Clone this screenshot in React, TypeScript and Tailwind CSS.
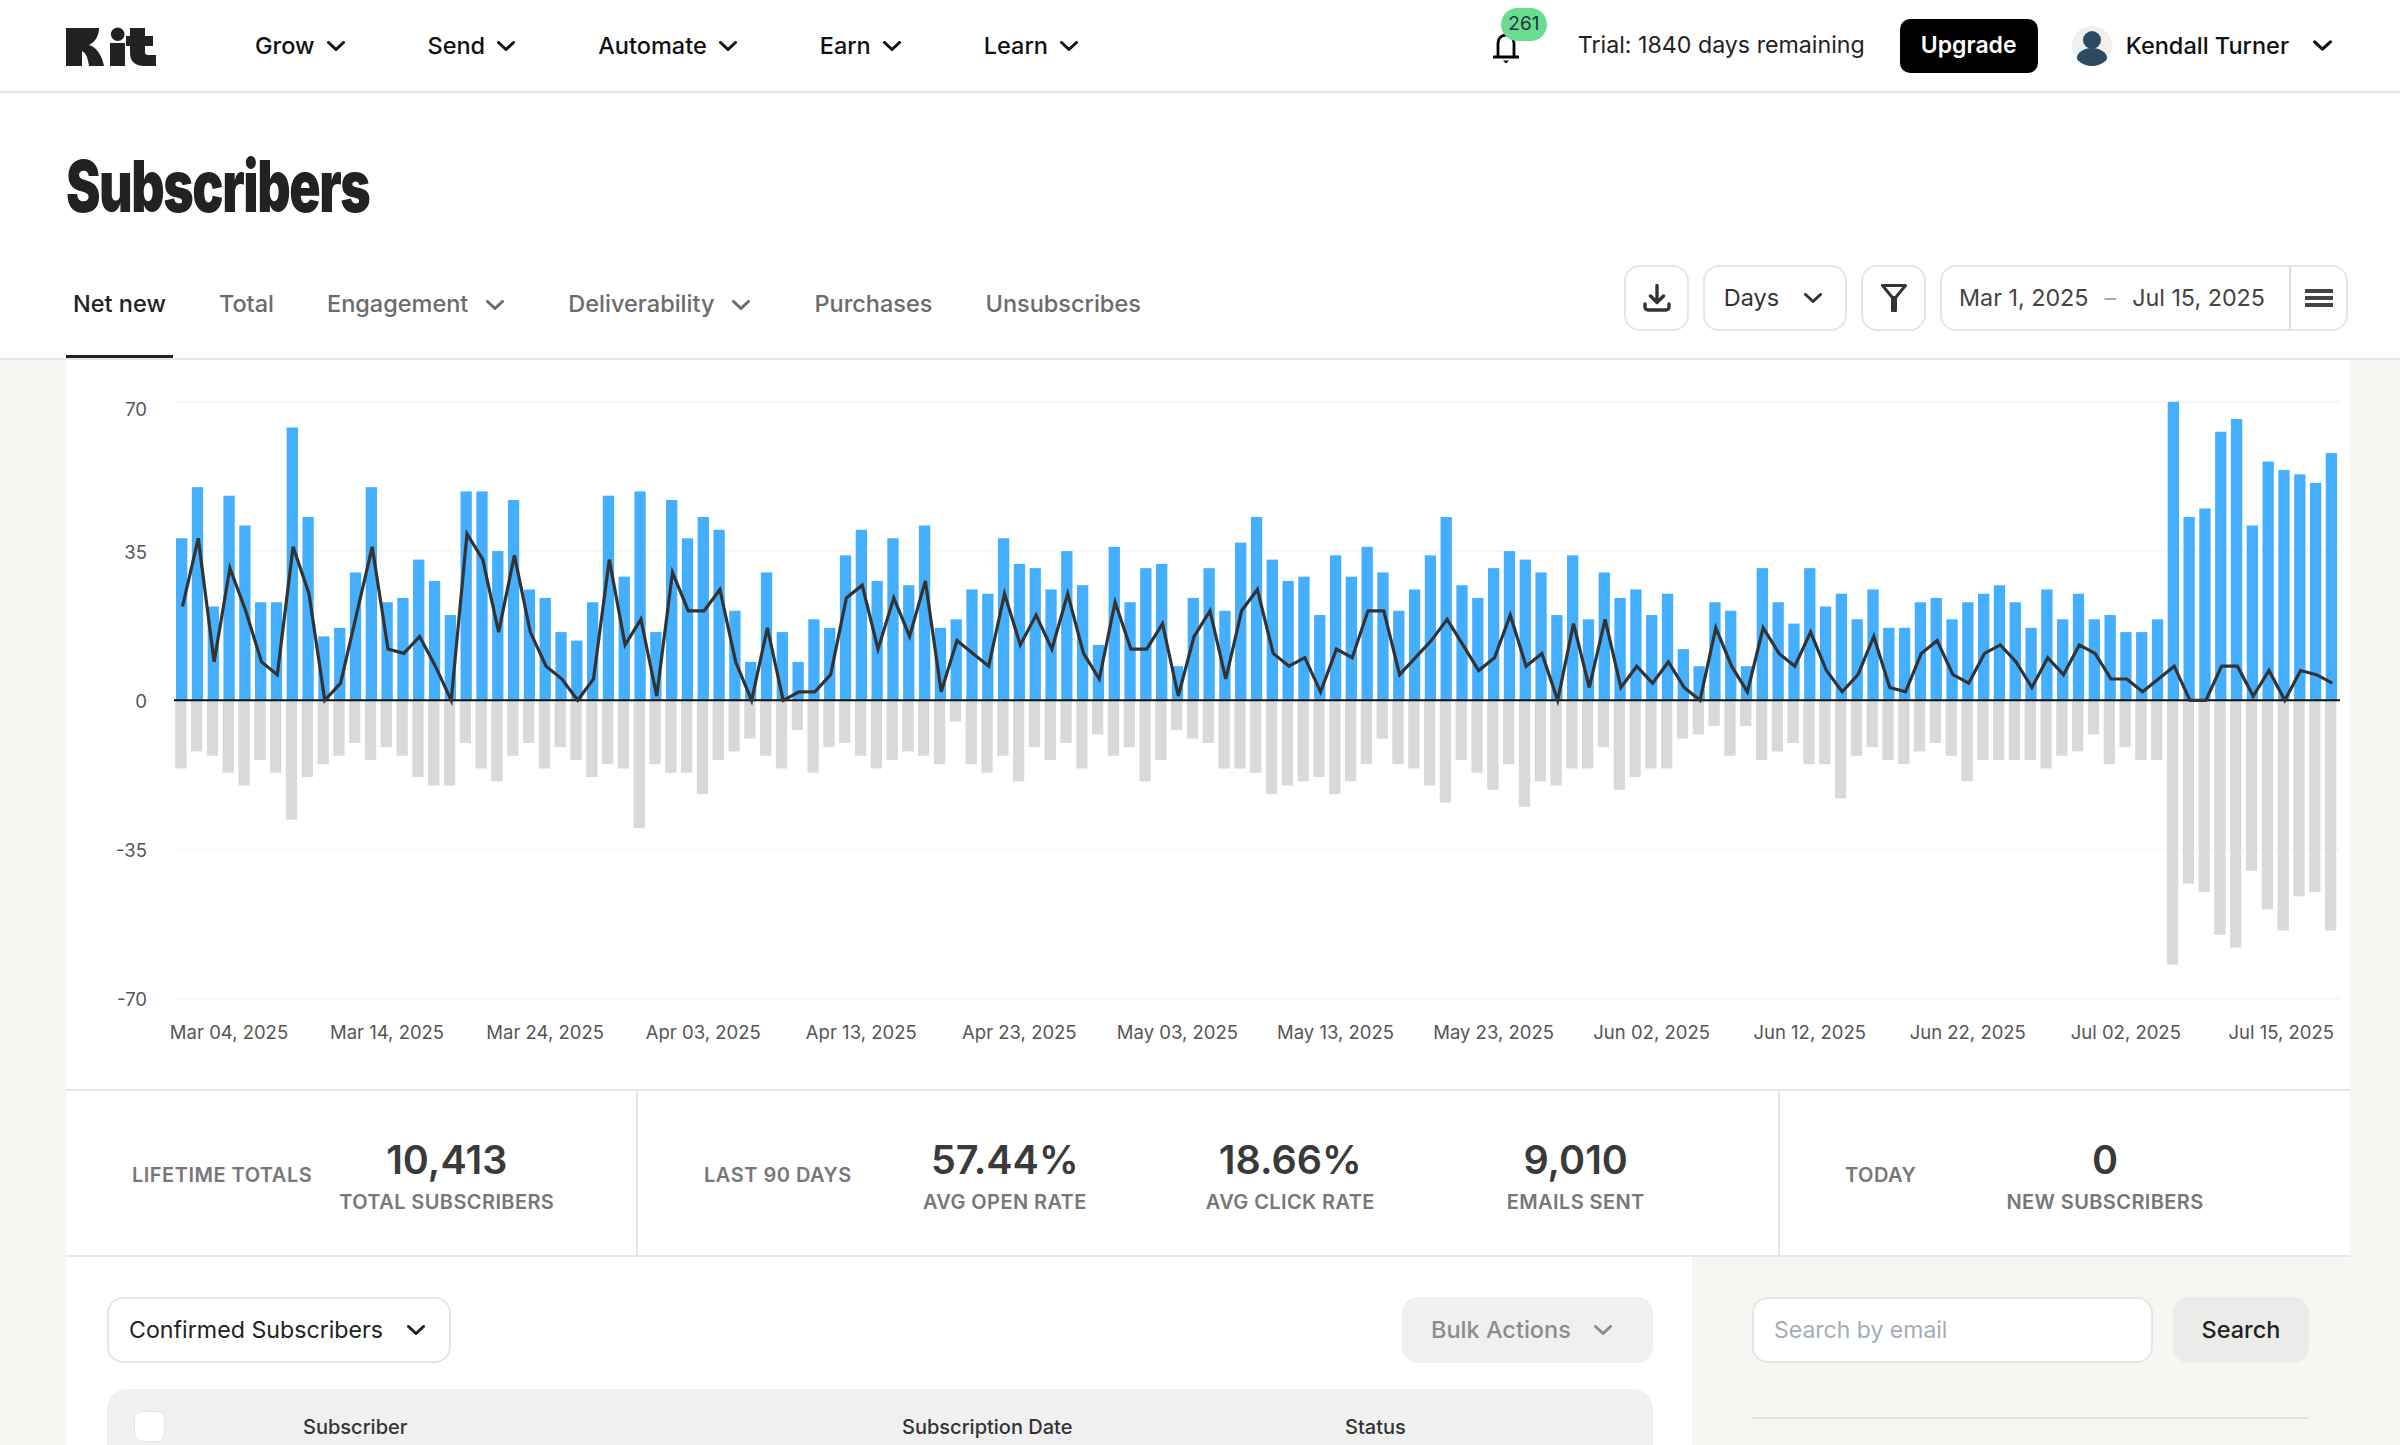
import type { ReactNode } from 'react'

const signups = [
  38, 50, 22, 48, 41, 23, 23, 64, 43, 15, 17, 30, 50, 23, 24, 33, 28, 20, 49, 49, 35, 47, 26, 24, 16, 14, 23, 48, 29, 49, 16,
  47, 38, 43, 40, 21, 9, 30, 16, 9, 19, 17, 34, 40, 28, 38, 27, 41, 17, 19, 26, 25, 38, 32, 31, 26, 35, 27, 13, 36, 23, 31, 32, 8, 24, 31, 21, 37, 43,
  33, 28, 29, 20, 34, 29, 36, 30, 21, 26, 34, 43, 27, 24, 31, 35, 33, 30, 20, 34, 19, 30, 24, 26, 20, 25, 12, 8, 23, 21, 8, 31, 23, 18, 31, 22, 25, 19,
  26, 17, 17, 23, 24, 19, 23, 25, 27, 23, 17, 26, 19, 25, 19, 20, 16, 16, 19, 70, 43, 45, 63, 66, 41, 56, 54, 53, 51, 58,
]

const unsubs = [
  16, 12, 13, 17, 20, 14, 17, 28, 18, 15, 13, 10, 14, 11, 13, 18, 20, 20, 10, 16, 19, 13, 10, 16, 11, 14, 18, 15, 16, 30, 15,
  17, 17, 22, 14, 12, 9, 13, 16, 7, 17, 11, 10, 13, 16, 14, 12, 13, 15, 5, 15, 17, 13, 19, 11, 14, 10, 16, 8, 13, 11, 19, 14, 7, 9, 10, 16, 16, 17,
  22, 20, 19, 18, 22, 19, 15, 9, 15, 16, 20, 24, 14, 17, 21, 15, 25, 19, 20, 16, 16, 11, 21, 18, 16, 16, 9, 8, 6, 13, 6, 14, 12, 10, 15, 15, 23, 13,
  11, 14, 15, 12, 10, 13, 19, 14, 14, 14, 14, 16, 13, 12, 8, 15, 11, 14, 14, 62, 43, 45, 55, 58, 40, 49, 54, 46, 45, 54,
]

const ticks = [
  'Mar 04, 2025', 'Mar 14, 2025', 'Mar 24, 2025', 'Apr 03, 2025', 'Apr 13, 2025', 'Apr 23, 2025', 'May 03, 2025',
  'May 13, 2025', 'May 23, 2025', 'Jun 02, 2025', 'Jun 12, 2025', 'Jun 22, 2025', 'Jul 02, 2025',
]

const ZERO = 700.3
const UNIT = 4.263
const STEP = 15.807

function Chevron({ className = 'w-[18px] h-[10px]' }: { className?: string }) {
  return (
    <svg viewBox="0 0 18 10" fill="none" className={className}>
      <path d="M1.5 1.5 9 8.5l7.5-7" stroke="currentColor" strokeWidth="3" strokeLinecap="round" strokeLinejoin="round" />
    </svg>
  )
}

function KitLogo() {
  return (
    <svg viewBox="0 0 90 40" className="w-[90px] h-[40px]" fill="#222222" role="img" aria-label="Kit">
      <path d="M0 2h33c0 8-4 14-10 17 7 2 13 10 15 21H23c-1-8-3-13-7-15v15H0z" />
      <circle cx="51.7" cy="8.3" r="6.8" />
      <rect x="44" y="17" width="15" height="23" />
      <path d="M64 2h15v8h8v10h-8v6c0 2 1 3 3 3h8v11H78c-9 0-14-5-14-13v-7h-4V10h4z" />
    </svg>
  )
}

function Bell() {
  return (
    <svg viewBox="0 0 26 32" fill="none" className="w-[26px] h-[32px] text-black">
      <path d="M5 25V11a8 8 0 0 1 16 0v14" stroke="currentColor" strokeWidth="2.8" />
      <path d="M1 25h24" stroke="currentColor" strokeWidth="3" strokeLinecap="round" />
      <path d="M10 28.5h6l-3 3z" fill="currentColor" />
    </svg>
  )
}

function Avatar() {
  return (
    <div className="w-10 h-10 rounded-full bg-[#efefef] overflow-hidden">
      <svg viewBox="0 0 40 40" className="w-10 h-10" fill="#2c4a63">
        <circle cx="20" cy="14" r="9" />
        <ellipse cx="20" cy="32" rx="15" ry="10" />
      </svg>
    </div>
  )
}

function OutlineButton({ className, children }: { className: string; children: ReactNode }) {
  return (
    <div className={`h-[66px] flex items-center justify-center bg-white border-2 border-[#e6e6e6] rounded-[16px] ${className}`}>
      {children}
    </div>
  )
}

function NavItem({ label }: { label: string }) {
  return (
    <div className="flex items-center gap-[12px] text-[23.5px] font-medium text-[#111111]">
      {label}
      <Chevron />
    </div>
  )
}

function Tab({ label, active, menu }: { label: string; active?: boolean; menu?: boolean }) {
  return (
    <div
      className={`h-[93px] px-[7px] pt-[24px] flex items-start gap-[18px] text-[23.5px] leading-[30px] font-medium border-b-[3px] ${
        active ? 'text-[#222222] border-[#222222]' : 'text-[#6b6b6b] border-transparent'
      } ${menu ? 'pr-[18px]' : ''}`}
    >
      {label}
      {menu && <Chevron className="w-[18px] h-[10px] mt-[11px]" />}
    </div>
  )
}

function Stat({ value, label, className = '' }: { value: string; label: string; className?: string }) {
  return (
    <div className={`flex flex-col items-center ${className}`}>
      <div className="text-[39.5px] leading-[48px] font-semibold text-[#3a3a3a]">{value}</div>
      <div className="mt-[6px] text-[20px] leading-[24px] tracking-[0.4px] font-semibold text-[#777777]">{label}</div>
    </div>
  )
}

function StatTitle({ children }: { children: ReactNode }) {
  return <div className="text-[20px] leading-[24px] tracking-[0.5px] font-semibold text-[#777777]">{children}</div>
}

function Chart() {
  const y = (v: number) => ZERO - v * UNIT
  const points = signups.map((s, i) => `${(182.5 + i * STEP).toFixed(1)},${y(s - unsubs[i]).toFixed(1)}`).join(' ')
  return (
    <svg viewBox="66 360 2284 729" className="block w-[2284px] h-[729px] bg-white">
      {[70, 35, -35, -70].map((v) => (
        <line key={v} x1="175" x2="2340" y1={y(v)} y2={y(v)} stroke="#f4f4f4" strokeWidth="1.5" />
      ))}
      {signups.map((s, i) => (
        <rect key={i} x={176 + i * STEP} y={y(s)} width="11.3" height={s * UNIT} fill="#44aeff" />
      ))}
      {unsubs.map((u, i) => (
        <rect key={i} x={175.2 + i * STEP} y={ZERO} width="11.3" height={u * UNIT} fill="#d9d9d9" />
      ))}
      <line x1="174" x2="2340" y1={ZERO} y2={ZERO} stroke="#111111" strokeWidth="2" />
      <polyline points={points} fill="none" stroke="#333333" strokeWidth="3.2" strokeLinejoin="miter" />
      <g fontFamily="Inter, sans-serif" fontSize="18.5" fill="#555555">
        <text x="147" y="416" textAnchor="end">70</text>
        <text x="147" y="559" textAnchor="end">35</text>
        <text x="147" y="708" textAnchor="end">0</text>
        <text x="147" y="857" textAnchor="end">-35</text>
        <text x="147" y="1006" textAnchor="end">-70</text>
        {ticks.map((t, i) => (
          <text key={t} x={229 + i * 158.07} y="1039" textAnchor="middle">{t}</text>
        ))}
        <text x="2334" y="1039" textAnchor="end">Jul 15, 2025</text>
      </g>
    </svg>
  )
}

export default function App() {
  return (
    <div className="h-[1445px] overflow-hidden bg-[#f7f6f3] font-['Inter',sans-serif]">
      <header className="h-[93px] bg-white border-b-2 border-[#e6e6e6] pl-[66px] pr-[68px] flex items-center">
        <KitLogo />
        <nav className="ml-[99px] flex items-center gap-[83px]">
          <NavItem label="Grow" />
          <NavItem label="Send" />
          <NavItem label="Automate" />
          <NavItem label="Earn" />
          <NavItem label="Learn" />
        </nav>
        <div className="ml-auto flex items-center">
          <div className="relative mt-[4px]">
            <Bell />
            <div className="absolute left-[8px] top-[-24px] w-[46px] h-[33px] rounded-full bg-[#68dc8f] flex items-center justify-center text-[19px] text-[#2a3340]">
              261
            </div>
          </div>
          <div className="ml-[59px] text-[23.2px] text-[#222222]">Trial: 1840 days remaining</div>
          <div className="ml-[35px] w-[138px] h-[54px] rounded-[10px] bg-black text-white text-[23px] font-semibold flex items-center justify-center">
            Upgrade
          </div>
          <div className="ml-[34px]">
            <Avatar />
          </div>
          <div className="ml-[14px] text-[23.5px] font-medium text-[#111111]">Kendall Turner</div>
          <div className="ml-[24px] text-[#111111]">
            <Chevron className="w-[19px] h-[11px]" />
          </div>
        </div>
      </header>

      <section className="bg-white border-b-2 border-[#e6e6e6]">
        <div className="h-[172px] pl-[66px] pt-[55px]">
          <h1 className="inline-block origin-left scale-x-[0.72] font-black text-[72px] leading-[76px] tracking-[-2px] text-[#222222]">
            Subscribers
          </h1>
        </div>
        <div className="h-[93px] pl-[66px] pr-[52px] flex justify-between">
          <div className="flex gap-[39px]">
            <Tab label="Net new" active />
            <Tab label="Total" />
            <Tab label="Engagement" menu />
            <Tab label="Deliverability" menu />
            <Tab label="Purchases" />
            <Tab label="Unsubscribes" />
          </div>
          <div className="flex gap-[14px] text-[#333333]">
            <OutlineButton className="w-[65px]">
              <svg viewBox="0 0 28 28" fill="none" className="w-[28px] h-[28px]">
                <path d="M14 1.5v17M7.5 12l6.5 6.5 6.5-6.5" stroke="currentColor" strokeWidth="3.4" strokeLinecap="round" strokeLinejoin="round" />
                <path d="M2 20v3a3 3 0 0 0 3 3h18a3 3 0 0 0 3-3v-3" stroke="currentColor" strokeWidth="3.4" strokeLinecap="round" />
              </svg>
            </OutlineButton>
            <OutlineButton className="w-[144px] gap-[25px] text-[23.5px] pr-[4px]">
              Days
              <Chevron />
            </OutlineButton>
            <OutlineButton className="w-[65px]">
              <svg viewBox="0 0 26 28" fill="none" className="w-[26px] h-[28px]">
                <path d="M1.5 1.5h23L13 15.5z" stroke="currentColor" strokeWidth="3" strokeLinejoin="round" />
                <path d="M13 15v11" stroke="currentColor" strokeWidth="6" strokeLinecap="round" />
              </svg>
            </OutlineButton>
            <OutlineButton className="w-[408px] rounded-[8px] !justify-start overflow-hidden text-[23.3px] text-[#444444]">
              <div className="w-[347px] h-full pl-[17px] flex items-center">
                Mar 1, 2025
                <span className="mx-[16px] text-[#aaaaaa]">–</span>
                Jul 15, 2025
              </div>
              <div className="flex-1 h-full border-l-2 border-[#dddddd] flex items-center justify-center">
                <svg viewBox="0 0 28 18" className="w-[28px] h-[18px]" fill="currentColor">
                  <rect width="28" height="4" />
                  <rect y="7" width="28" height="4" />
                  <rect y="14" width="28" height="4" />
                </svg>
              </div>
            </OutlineButton>
          </div>
        </div>
      </section>

      <main className="w-[2284px] ml-[66px]">
        <Chart />

        <div className="h-[168px] bg-white border-y-2 border-[#e6e6e6] flex">
          <div className="w-[572px] border-r-2 border-[#e6e6e6] pl-[66px] pt-[4px] flex items-center">
            <StatTitle>LIFETIME TOTALS</StatTitle>
            <Stat value="10,413" label="TOTAL SUBSCRIBERS" className="ml-[27px]" />
          </div>
          <div className="w-[1142px] border-r-2 border-[#e6e6e6] pl-[66px] pt-[4px] flex items-center">
            <StatTitle>LAST 90 DAYS</StatTitle>
            <Stat value="57.44%" label="AVG OPEN RATE" className="ml-[71px]" />
            <Stat value="18.66%" label="AVG CLICK RATE" className="ml-[119px]" />
            <Stat value="9,010" label="EMAILS SENT" className="ml-[132px]" />
          </div>
          <div className="flex-1 pl-[65px] pt-[4px] flex items-center">
            <StatTitle>TODAY</StatTitle>
            <Stat value="0" label="NEW SUBSCRIBERS" className="ml-[90px]" />
          </div>
        </div>

        <div className="flex">
          <div className="w-[1626px] h-[200px] bg-white pl-[41px] pr-[39px] pt-[40px]">
            <div className="flex justify-between">
              <div className="w-[344px] h-[66px] pl-[20px] pr-[24px] bg-white border-2 border-[#e6e6e6] rounded-[16px] flex items-center justify-between text-[23.2px] text-[#222222]">
                Confirmed Subscribers
                <Chevron />
              </div>
              <div className="w-[251px] h-[66px] pl-[29px] bg-[#f0f0f0] rounded-[16px] flex items-center gap-[23px] text-[23.5px] font-medium text-[#8c8c8c]">
                Bulk Actions
                <Chevron />
              </div>
            </div>
            <div className="mt-[26px] h-[120px] bg-[#f0f0f0] rounded-t-[20px] pl-[27px] pt-[22px] flex items-start text-[20px] leading-[32px] font-medium text-[#333333]">
              <div className="w-[31px] h-[31px] bg-white border border-[#e6e6e6] rounded-[8px]" />
              <div className="ml-[138px] w-[599px]">Subscriber</div>
              <div className="w-[443px]">Subscription Date</div>
              <div>Status</div>
            </div>
          </div>
          <div className="flex-1 pl-[60px] pr-[41px] pt-[40px]">
            <div className="flex gap-[20px]">
              <div className="flex-1 h-[66px] pl-[20px] bg-white border-2 border-[#e6e6e6] rounded-[16px] flex items-center text-[23px] text-[#a3adb8]">
                Search by email
              </div>
              <div className="w-[136px] h-[66px] bg-[#ebebe9] rounded-[16px] flex items-center justify-center text-[23.5px] font-medium text-[#222222]">
                Search
              </div>
            </div>
            <div className="mt-[54px] border-t-2 border-[#e3e3e3]" />
          </div>
        </div>
      </main>
    </div>
  )
}
